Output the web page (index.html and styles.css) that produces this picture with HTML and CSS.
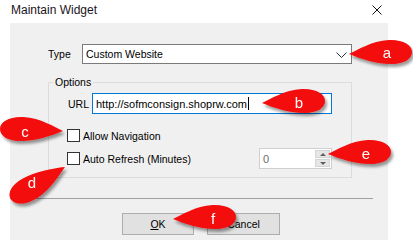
FILE: index.html
```html
<!DOCTYPE html>
<html lang="en">
<head>
  <meta charset="UTF-8">
  <title>Maintain Widget</title>
  <link rel="stylesheet" href="styles.css">
</head>
<body>
<div class="window">

  <div class="titlebar">
    <span class="title">Maintain Widget</span>
    <svg class="close" width="10" height="10" viewBox="0 0 10 10">
      <path d="M0.5 0.5 L9.5 9.5 M9.5 0.5 L0.5 9.5" stroke="#111" stroke-width="1" fill="none"/>
    </svg>
  </div>

  <div class="client">
    <div class="type-row">
      <span class="type-label">Type</span>
      <div class="select">
        <span>Custom Website</span>
        <svg class="chevron" width="11" height="6" viewBox="0 0 11 6">
          <path d="M0.5 0.5 L5.5 5.5 L10.5 0.5" stroke="#333" stroke-width="1" fill="none"/>
        </svg>
      </div>
    </div>

    <div class="group">
      <div class="legend">Options</div>

      <div class="url-row">
        <span class="url-label">URL</span>
        <div class="textbox">http://sofmconsign.shoprw.com<span class="caret"></span></div>
      </div>

      <div class="check-row nav-row">
        <span class="check"></span>
        <span class="check-text">Allow Navigation</span>
      </div>

      <div class="check-row refresh-row">
        <span class="check"></span>
        <span class="check-text">Auto Refresh (Minutes)</span>
        <div class="spinner">
          <span class="spin-value">0</span>
          <div class="spin-buttons">
            <span class="spin-btn"><span class="arrow-up"></span></span>
            <span class="spin-btn"><span class="arrow-down"></span></span>
          </div>
        </div>
      </div>
    </div>

    <div class="separator"></div>

    <div class="buttons">
      <button class="btn ok-btn"><u>O</u>K</button>
      <button class="btn cancel-btn">Cancel</button>
    </div>
  </div>

  <!-- callout annotations over the dialog -->
  <svg class="callouts" width="413" height="240" viewBox="0 0 413 240">
    <defs>
      <path id="drop" d="M0,0 C9,-4 22,-13 40,-14 C54,-14.5 63,-9 63,-2 C63,5 55,10 43,10 C28,10 12,5 0,0 Z"/>
      <filter id="shadow" x="-20%" y="-20%" width="140%" height="140%">
        <feDropShadow dx="2" dy="3" stdDeviation="1.8" flood-color="#000" flood-opacity=".4"/>
      </filter>
    </defs>
    <g filter="url(#shadow)" fill="#f40808">
      <use href="#drop" transform="translate(349,54)"/>
      <use href="#drop" transform="translate(262,103)"/>
      <use href="#drop" transform="translate(63,131) scale(-1,1)"/>
      <use href="#drop" transform="translate(65,167) rotate(151.5)"/>
      <use href="#drop" transform="translate(328,154)"/>
      <use href="#drop" transform="translate(173,219)"/>
    </g>
    <g class="callout-letters">
      <text x="387" y="58">a</text>
      <text x="299" y="108">b</text>
      <text x="25" y="137">c</text>
      <text x="32" y="188">d</text>
      <text x="366" y="159">e</text>
      <text x="213" y="224">f</text>
    </g>
  </svg>

</div>
</body>
</html>
```

FILE: styles.css
```css
*{ box-sizing:border-box; }
html,body{
  margin:0; padding:0;
  width:413px; height:240px;
  overflow:hidden;
  background:#fff;
  font-family:"Liberation Sans", Arial, sans-serif;
  color:#000;
}

.window{
  position:relative;
  width:413px; height:240px;
}

/* ================= TITLE BAR ================= */
.titlebar{
  height:23px;
  display:flex; justify-content:space-between; align-items:flex-start;
  padding:0 31px 0 11px;
}
.title{
  font-size:12px;
  line-height:14px;
  padding-top:3px;
  color:#1b1420;
}
.close{ margin-top:5px; }

/* ================= CLIENT AREA ================= */
.client{
  margin-left:10px;
  width:378px; height:217px;
  background:#f0f0f0;
  padding-top:21px;
  font-size:10.5px;
}

.type-row{
  display:flex; align-items:center;
  height:20px;
}
.type-label{
  margin-left:38px;
  width:34px;
}
.select{
  width:270px; height:20px;
  border:1px solid #7a7a7a;
  background:#fff;
  display:flex; align-items:center; justify-content:space-between;
  padding:0 4px 0 3px;
  font-size:10.5px;
}
.chevron{ margin-top:1px; }

/* ================= OPTIONS GROUP ================= */
.group{
  margin:18px 0 0 38px;
  width:304px;
  border:1px solid #dcdcdc;
  padding-bottom:8px;
}
.legend{
  width:max-content;
  margin:-8px 0 0 4px;
  padding:0 2px;
  line-height:14px;
  background:#f0f0f0;
}

.url-row{
  display:flex; align-items:center;
  margin-top:4px;
  height:21px;
}
.url-label{
  margin-left:19px;
  width:24px;
}
.textbox{
  width:240px; height:21px;
  border:1px solid #0078d7;
  background:#fff;
  display:flex; align-items:center;
  padding-left:3px;
  font-size:11px;
}
.caret{
  width:1px; height:13px;
  background:#000;
  margin-left:1px;
}

.check-row{
  display:flex; align-items:center;
}
.nav-row{ margin-top:15px; height:13px; }
.refresh-row{ margin-top:6px; height:21px; }
.check{
  width:13px; height:13px;
  margin-left:18px;
  border:1px solid #333;
  background:#fff;
}
.check-text{ margin-left:3px; }

.spinner{
  margin-left:auto; margin-right:19px;
  width:73px; height:21px;
  border:1px solid #cfcfcf;
  background:#fff;
  display:flex; align-items:center; justify-content:space-between;
  padding:1px;
}
.spin-value{
  padding-left:2px;
  font-size:11px;
  color:#6a6a6a;
}
.spin-buttons{
  width:15px; height:17px;
  display:flex; flex-direction:column; gap:1px;
}
.spin-btn{
  flex:1;
  background:#e6e6e6;
  border:1px solid #d4d4d4;
  display:flex; align-items:center; justify-content:center;
}
.arrow-up, .arrow-down{
  width:0; height:0;
  border-left:3px solid transparent;
  border-right:3px solid transparent;
}
.arrow-up{ border-bottom:3px solid #606060; }
.arrow-down{ border-top:3px solid #606060; }

/* ================= BUTTONS ================= */
.separator{
  margin-top:20px;
  width:363px; height:1px;
  background:#a0a0a0;
}
.buttons{
  display:flex; gap:13px;
  margin-top:14px;
  padding-left:112px;
}
.btn{
  height:22px;
  border:1px solid #adadad;
  background:#e1e1e1;
  font-family:inherit;
  font-size:10.5px;
  color:#000;
  padding:0;
}
.ok-btn{ width:72px; }
.cancel-btn{ width:73px; }

/* ================= CALLOUTS ================= */
.callouts{
  position:absolute;
  left:0; top:0;
  pointer-events:none;
}
.callout-letters text{
  fill:#fff;
  font-family:"Liberation Sans", Arial, sans-serif;
  font-size:15px;
  text-anchor:middle;
}
```
